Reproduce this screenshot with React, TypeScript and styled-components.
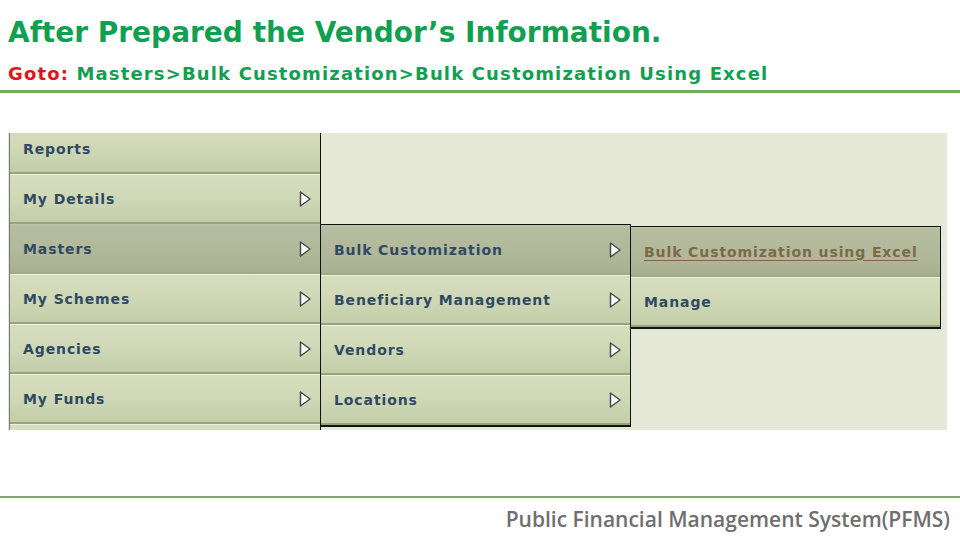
import React from 'react';
import styled, { createGlobalStyle } from 'styled-components';

const GlobalStyle = createGlobalStyle`
  html, body { margin: 0; padding: 0; background: #ffffff; }
  body { width: 960px; height: 540px; overflow: hidden; }
`;

const Page = styled.div`
  width: 960px;
  height: 540px;
  display: flex;
  flex-direction: column;
  background: #fff;
`;

const Header = styled.header`
  padding: 15px 8px 5px;
  border-bottom: 3px solid #79a85c;
`;

const Title = styled.h1`
  margin: 0;
  font-family: "DejaVu Sans", Verdana, sans-serif;
  font-weight: bold;
  font-size: 28px;
  line-height: 36px;
  color: #119f52;
`;

const GotoLine = styled.div`
  margin-top: 12px;
  font-family: "DejaVu Sans", Tahoma, sans-serif;
  font-weight: bold;
  font-size: 18px;
  line-height: 22px;
  letter-spacing: 1.15px;
  color: #119f52;
  white-space: nowrap;
`;

const Red = styled.span`
  color: #e0141a;
`;

const Panel = styled.section`
  margin: 40px 0 0 8px;
  width: 939px;
  height: 297px;
  background: #e5e8d6;
  overflow: hidden;
  display: flex;
  align-items: flex-start;
  padding-left: 1px;
  box-sizing: border-box;
`;

const MenuColumn = styled.ul<{ $top: number; $framed?: boolean }>`
  list-style: none;
  margin: ${p => p.$top}px 0 0 0;
  padding: 0;
  width: ${p => (p.$framed ? 309 : 310)}px;
  flex: none;
  box-sizing: content-box;
  ${p => p.$framed
    ? `border: 1px solid #111; border-bottom-width: 2px; border-left: none;`
    : `border-left: 1px solid #777; border-right: 1px solid #111;`}
`;

const Row = styled.li<{ $active?: boolean }>`
  height: 47px;
  display: flex;
  align-items: center;
  justify-content: space-between;
  padding: 0 9px 0 13px;
  border-top: 1px solid ${p => (p.$active ? '#bcc2a6' : '#eef1dd')};
  border-bottom: 2px solid ${p => (p.$active ? '#a3aa8b' : '#98a47e')};
  background: ${p => p.$active
    ? 'linear-gradient(#b7bda0, #b1b799 60%, #a9b090)'
    : 'linear-gradient(#d7debf, #cdd6b4 60%, #c3cda7)'};
`;

const Label = styled.span<{ $link?: boolean }>`
  font-family: "DejaVu Sans", Verdana, sans-serif;
  font-weight: bold;
  font-size: 14px;
  letter-spacing: 0.9px;
  color: ${p => (p.$link ? '#7b6a48' : '#2f4a63')};
  text-decoration: ${p => (p.$link ? 'underline' : 'none')};
  text-underline-offset: 3px;
`;

const Arrow = () => (
  <svg width="12" height="16" viewBox="0 0 12 16">
    <polygon points="1.5,1 11,8 1.5,15" fill="#ffffff" stroke="#4a4a4a" strokeWidth="1.5" strokeLinejoin="round" />
  </svg>
);

const Spacer = styled.div`
  flex: 1;
`;

const Footer = styled.footer`
  border-top: 2px solid #80a964;
  padding: 7px 10px 0 0;
  height: 35px;
  text-align: right;
  font-family: "Open Sans", "Noto Sans", sans-serif;
  font-size: 21px;
  font-weight: 600;
  color: #6f6f6f;
  white-space: nowrap;
`;

type Item = { label: string; sub?: boolean; active?: boolean; link?: boolean };

const mainMenu: Item[] = [
  { label: 'Reports' },
  { label: 'My Details', sub: true },
  { label: 'Masters', sub: true, active: true },
  { label: 'My Schemes', sub: true },
  { label: 'Agencies', sub: true },
  { label: 'My Funds', sub: true },
  { label: '' },
];

const mastersMenu: Item[] = [
  { label: 'Bulk Customization', sub: true, active: true },
  { label: 'Beneficiary Management', sub: true },
  { label: 'Vendors', sub: true },
  { label: 'Locations', sub: true },
];

const bulkMenu: Item[] = [
  { label: 'Bulk Customization using Excel', active: true, link: true },
  { label: 'Manage' },
];

const Menu = ({ items, top, framed }: { items: Item[]; top: number; framed?: boolean }) => (
  <MenuColumn $top={top} $framed={framed}>
    {items.map((it, i) => (
      <Row key={i} $active={it.active}>
        <Label $link={it.link}>{it.label}</Label>
        {it.sub && <Arrow />}
      </Row>
    ))}
  </MenuColumn>
);

export default function App() {
  return (
    <Page>
      <GlobalStyle />
      <Header>
        <Title>After Prepared the Vendor’s Information.</Title>
        <GotoLine>
          <Red>Goto:</Red> Masters&gt;Bulk Customization&gt;Bulk Customization Using Excel
        </GotoLine>
      </Header>
      <Panel>
        <Menu items={mainMenu} top={-9} />
        <Menu items={mastersMenu} top={91} framed />
        <Menu items={bulkMenu} top={93} framed />
      </Panel>
      <Spacer />
      <Footer>Public Financial Management System(PFMS)</Footer>
    </Page>
  );
}
